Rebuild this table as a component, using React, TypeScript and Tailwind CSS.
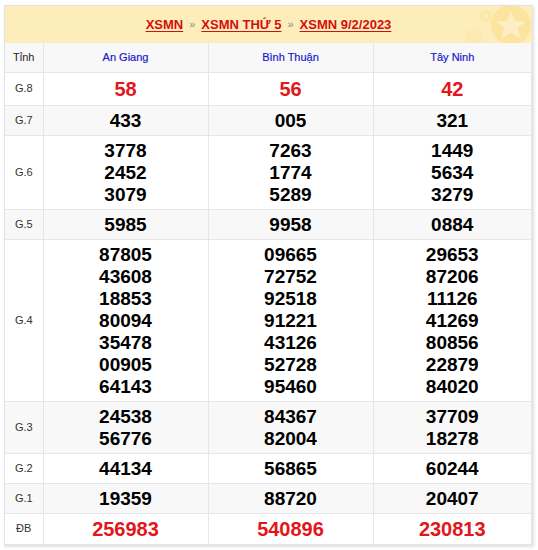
const provinces = ['An Giang', 'Bình Thuận', 'Tây Ninh']

type Row = { label: string; values: string[][]; red?: boolean; big?: boolean }

const rows: Row[] = [
  { label: 'G.8', values: [['58'], ['56'], ['42']], red: true, big: true },
  { label: 'G.7', values: [['433'], ['005'], ['321']] },
  {
    label: 'G.6',
    values: [
      ['3778', '2452', '3079'],
      ['7263', '1774', '5289'],
      ['1449', '5634', '3279'],
    ],
  },
  { label: 'G.5', values: [['5985'], ['9958'], ['0884']] },
  {
    label: 'G.4',
    values: [
      ['87805', '43608', '18853', '80094', '35478', '00905', '64143'],
      ['09665', '72752', '92518', '91221', '43126', '52728', '95460'],
      ['29653', '87206', '11126', '41269', '80856', '22879', '84020'],
    ],
  },
  {
    label: 'G.3',
    values: [
      ['24538', '56776'],
      ['84367', '82004'],
      ['37709', '18278'],
    ],
  },
  { label: 'G.2', values: [['44134'], ['56865'], ['60244']] },
  { label: 'G.1', values: [['19359'], ['88720'], ['20407']] },
  { label: 'ĐB', values: [['256983'], ['540896'], ['230813']], red: true },
]

export default function App() {
  return (
    <div className="bg-white min-h-[550px] pt-[5px] px-[4px] font-['Liberation_Sans',Arial,sans-serif]">
      <div className="w-[529px] border border-[#e3e3e3] shadow-[1px_1px_3px_rgba(0,0,0,0.12)]">
        <Header />
        <table className="w-full border-collapse table-fixed">
          <colgroup>
            <col className="w-[38px]" />
            <col className="w-[165px]" />
            <col className="w-[165px]" />
            <col />
          </colgroup>
          <thead>
            <tr className="bg-[#f8f8f8] h-[29px]">
              <th className="border border-[#e6e6e6] border-l-0 border-t-0 text-[11px] font-normal text-[#222]">Tỉnh</th>
              {provinces.map((p) => (
                <th key={p} className="border border-[#e6e6e6] border-t-0 text-[11px] font-normal text-[#1a1acc] [-webkit-text-stroke:0.2px_#1a1acc]">
                  {p}
                </th>
              ))}
            </tr>
          </thead>
          <tbody>
            {rows.map((r, i) => (
              <tr key={r.label} className={i % 2 === 1 ? 'bg-[#f8f8f8]' : 'bg-white'}>
                <td className="border border-[#e6e6e6] border-l-0 text-center text-[11px] text-[#333]">{r.label}</td>
                {r.values.map((v, j) => (
                  <td
                    key={j}
                    className={
                      'border border-[#e6e6e6] text-center font-bold pt-[4px] pb-[3px] ' +
                      (r.red ? 'text-[#e3161b] ' : 'text-black ') +
                      (r.big ? 'text-[20px] leading-[25px]' : r.label === 'ĐB' ? 'text-[20px] leading-[23px]' : 'text-[19px] leading-[22px]')
                    }
                  >
                    {v.map((n) => (
                      <div key={n}>{n}</div>
                    ))}
                  </td>
                ))}
              </tr>
            ))}
          </tbody>
        </table>
      </div>
    </div>
  )
}

function Header() {
  return (
    <div className="relative h-[37px] bg-[#fdedbb] flex items-center justify-center gap-[6px] text-[13px] font-bold overflow-hidden">
      <svg className="absolute right-0 top-0" width="80" height="37" viewBox="0 0 80 37">
        <circle cx="59" cy="19" r="20" fill="#fde49e" />
        <polygon
          points="59,5 63,15 74,15.5 65.5,22 68.5,32.5 59,26.5 49.5,32.5 52.5,22 44,15.5 55,15"
          fill="#fdeec4"
        />
        <circle cx="34" cy="10" r="6" fill="#fde7a8" />
        <circle cx="34" cy="10" r="2.5" fill="#fdeebd" />
        <circle cx="22" cy="31" r="9" fill="#fce8ae" opacity="0.7" />
      </svg>
      <a className="relative text-[#d40d0d] underline underline-offset-2">XSMN</a>
      <span className="relative text-[#888] text-[11px] font-normal">»</span>
      <a className="relative text-[#d40d0d] underline underline-offset-2">XSMN THỨ 5</a>
      <span className="relative text-[#888] text-[11px] font-normal">»</span>
      <a className="relative text-[#d40d0d] underline underline-offset-2">XSMN 9/2/2023</a>
    </div>
  )
}
